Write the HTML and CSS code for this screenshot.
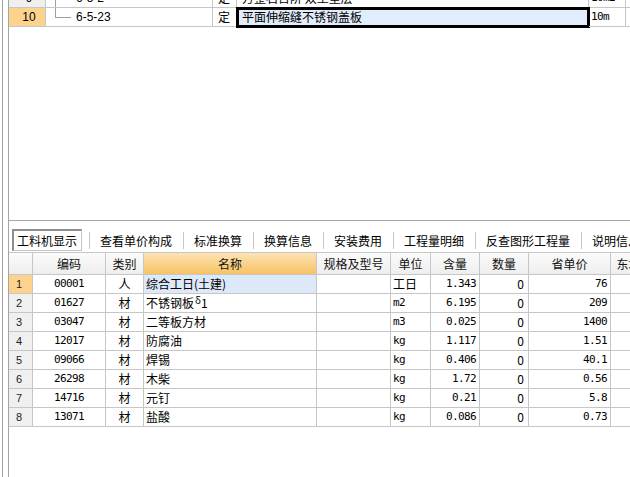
FILE: index.html
```html
<!DOCTYPE html>
<html lang="zh-CN">
<head>
<meta charset="utf-8">
<title>工料机显示</title>
<link rel="stylesheet" href="styles.css">
</head>
<body>
<div class="app">
  <div class="outer">
    <div class="frame">
      <section class="top">
        <div class="trow cut">
          <div class="c tnum">9</div>
          <div class="c tcode"><span class="stem"></span><span class="code-txt">6-5-2</span></div>
          <div class="c ttyp">定</div>
          <div class="c tname">方整石台阶 双土垫层</div>
          <div class="c tunit mono">10m2</div>
          <div class="c trest"></div>
        </div>
        <div class="trow">
          <div class="c tnum sel">10</div>
          <div class="c tcode"><span class="tree"></span><span class="code-txt">6-5-23</span></div>
          <div class="c ttyp">定</div>
          <div class="c tname active">平面伸缩缝不锈钢盖板</div>
          <div class="c tunit mono">10m</div>
          <div class="c trest"></div>
        </div>
      </section>

      <nav class="tabs">
        <div class="tab-first"><span class="tab-box">工料机显示</span></div>
        <span class="sep"></span>
        <div class="tab">查看单价构成</div>
        <span class="sep"></span>
        <div class="tab">标准换算</div>
        <span class="sep"></span>
        <div class="tab">换算信息</div>
        <span class="sep"></span>
        <div class="tab">安装费用</div>
        <span class="sep"></span>
        <div class="tab">工程量明细</div>
        <span class="sep"></span>
        <div class="tab">反查图形工程量</div>
        <span class="sep"></span>
        <div class="tab">说明信息</div>
      </nav>

      <div class="grid">
        <div class="h"></div>
        <div class="h">编码</div>
        <div class="h">类别</div>
        <div class="h h-sort">名称</div>
        <div class="h">规格及型号</div>
        <div class="h">单位</div>
        <div class="h">含量</div>
        <div class="h">数量</div>
        <div class="h">省单价</div>
        <div class="h">东北单价</div>

        <div class="d rn sel">1</div><div class="d ctr mono">00001</div><div class="d ctr">人</div><div class="d nm cur">综合工日(土建)</div><div class="d"></div><div class="d un">工日</div><div class="d num mono">1.343</div><div class="d num">0</div><div class="d num mono">76</div><div class="d"></div>
        <div class="d rn">2</div><div class="d ctr mono">01627</div><div class="d ctr">材</div><div class="d nm">不锈钢板<span class="delta">δ</span>1</div><div class="d"></div><div class="d un mono">m2</div><div class="d num mono">6.195</div><div class="d num">0</div><div class="d num mono">209</div><div class="d"></div>
        <div class="d rn">3</div><div class="d ctr mono">03047</div><div class="d ctr">材</div><div class="d nm">二等板方材</div><div class="d"></div><div class="d un mono">m3</div><div class="d num mono">0.025</div><div class="d num">0</div><div class="d num mono">1400</div><div class="d"></div>
        <div class="d rn">4</div><div class="d ctr mono">12017</div><div class="d ctr">材</div><div class="d nm">防腐油</div><div class="d"></div><div class="d un mono">kg</div><div class="d num mono">1.117</div><div class="d num">0</div><div class="d num mono">1.51</div><div class="d"></div>
        <div class="d rn">5</div><div class="d ctr mono">09066</div><div class="d ctr">材</div><div class="d nm">焊锡</div><div class="d"></div><div class="d un mono">kg</div><div class="d num mono">0.406</div><div class="d num">0</div><div class="d num mono">40.1</div><div class="d"></div>
        <div class="d rn">6</div><div class="d ctr mono">26298</div><div class="d ctr">材</div><div class="d nm">木柴</div><div class="d"></div><div class="d un mono">kg</div><div class="d num mono">1.72</div><div class="d num">0</div><div class="d num mono">0.56</div><div class="d"></div>
        <div class="d rn">7</div><div class="d ctr mono">14716</div><div class="d ctr">材</div><div class="d nm">元钉</div><div class="d"></div><div class="d un mono">kg</div><div class="d num mono">0.21</div><div class="d num">0</div><div class="d num mono">5.8</div><div class="d"></div>
        <div class="d rn">8</div><div class="d ctr mono">13071</div><div class="d ctr">材</div><div class="d nm">盐酸</div><div class="d"></div><div class="d un mono">kg</div><div class="d num mono">0.086</div><div class="d num">0</div><div class="d num mono">0.73</div><div class="d"></div>
      </div>
    </div>
  </div>
</div>
</body>
</html>
```

FILE: styles.css
```css
html, body {
  margin: 0;
  padding: 0;
}
body {
  width: 630px;
  height: 477px;
  overflow: hidden;
  background: #ffffff;
  color: #000000;
  font-family: "Noto Sans CJK SC", "Liberation Sans", sans-serif;
  font-size: 12px;
}
.app {
  height: 477px;
  padding-left: 2px;
  box-sizing: border-box;
}
.outer {
  height: 100%;
  border-left: 1px solid #a4a4a4;
  padding-left: 5px;
}
.frame {
  height: 100%;
  border-left: 1px solid #a4a4a4;
  overflow: hidden;
}

/* ---------- top grid ---------- */
.top {
  height: 221px;
  box-sizing: border-box;
  border-bottom: 1px solid #a8a8a8;
}
.trow {
  display: flex;
  height: 19px;
}
.trow.cut {
  height: 8px;
  overflow: hidden;
  align-items: flex-end;
}
.c {
  box-sizing: border-box;
  height: 19px;
  flex: none;
  border-right: 1px solid #c6c6c6;
  border-bottom: 1px solid #c6c6c6;
  display: flex;
  align-items: center;
  white-space: nowrap;
  overflow: hidden;
  line-height: 18px;
}
.tnum {
  width: 37px;
  background: #f0f0f0;
  justify-content: center;
  padding-left: 4px;
  font-family: "Liberation Sans", sans-serif;
  font-size: 12px;
}
.tnum.sel {
  background: #fdd28c;
}
.tcode {
  width: 167px;
  align-items: flex-start;
  font-family: "Liberation Sans", sans-serif;
}
.tree {
  flex: none;
  margin-left: 9px;
  width: 15px;
  height: 9px;
  border-left: 1px solid #a0a0a0;
  border-bottom: 1px solid #a0a0a0;
}
.stem {
  flex: none;
  margin-left: 9px;
  width: 16px;
  height: 19px;
  border-left: 1px solid #a0a0a0;
  box-sizing: border-box;
}
.code-txt {
  margin-left: 5px;
  align-self: center;
}
.ttyp {
  width: 24px;
  padding-left: 5px;
}
.tname {
  width: 352px;
  padding-left: 5px;
}
.tname.active {
  background: #e1edfb;
  outline: 3px solid #000000;
  outline-offset: -2px;
  overflow: visible;
}
.tunit {
  width: 37px;
  padding-left: 2px;
}
.trest {
  flex: 1;
  border-right: none;
}

/* ---------- tabs ---------- */
.tabs {
  display: flex;
  align-items: center;
  height: 22px;
  padding: 8px 0 1px 0;
  white-space: nowrap;
}
.tab-first {
  margin-left: 3px;
  margin-right: 7px;
  height: 22px;
  display: flex;
}
.tab-box {
  box-sizing: border-box;
  height: 22px;
  display: flex;
  align-items: center;
  padding: 0 4px 0 3px;
  border-style: solid;
  border-width: 2px 1px 1px 2px;
  border-color: #8e8e8e #c4c4c4 #c4c4c4 #8e8e8e;
  background: #ffffff;
}
.tab {
  padding: 0 11px 0 10px;
  height: 22px;
  display: flex;
  align-items: center;
}
.sep {
  flex: none;
  width: 1px;
  height: 17px;
  background: #c8c8c8;
}

/* ---------- bottom grid ---------- */
.grid {
  display: grid;
  width: 662px;
  grid-template-columns: 24px 73px 38px 173px 74px 40px 49px 49px 82px 60px;
}
.h, .d {
  box-sizing: border-box;
  border-right: 1px solid #c6c6c6;
  border-bottom: 1px solid #c6c6c6;
  white-space: nowrap;
  overflow: hidden;
  display: flex;
  align-items: center;
}
.h {
  height: 23px;
  border-top: 1px solid #c6c6c6;
  justify-content: center;
  background: linear-gradient(#fbfbfb, #eeeeee);
  color: #111111;
}
.h-sort {
  background: linear-gradient(#fde3b4, #f6c264);
}
.d {
  height: 19px;
  line-height: 18px;
}
.rn {
  background: #f0f0f0;
  padding-left: 7px;
  font-family: "Liberation Sans", sans-serif;
  font-size: 11px;
  color: #222222;
}
.rn.sel {
  background: #fcd28c;
}
.ctr {
  justify-content: center;
}
.nm {
  padding-left: 2px;
}
.nm.cur {
  background: #dde9f8;
}
.un {
  padding-left: 2px;
}
.num {
  justify-content: flex-end;
  padding-right: 4px;
}
.mono {
  font-family: "DejaVu Sans Mono", "Liberation Mono", monospace;
  font-size: 11px;
  letter-spacing: -0.6px;
}
.num.mono {
  padding-right: 3px;
}
.delta {
  font-size: 10px;
  position: relative;
  top: -3px;
  margin-left: 1px;
}
```
